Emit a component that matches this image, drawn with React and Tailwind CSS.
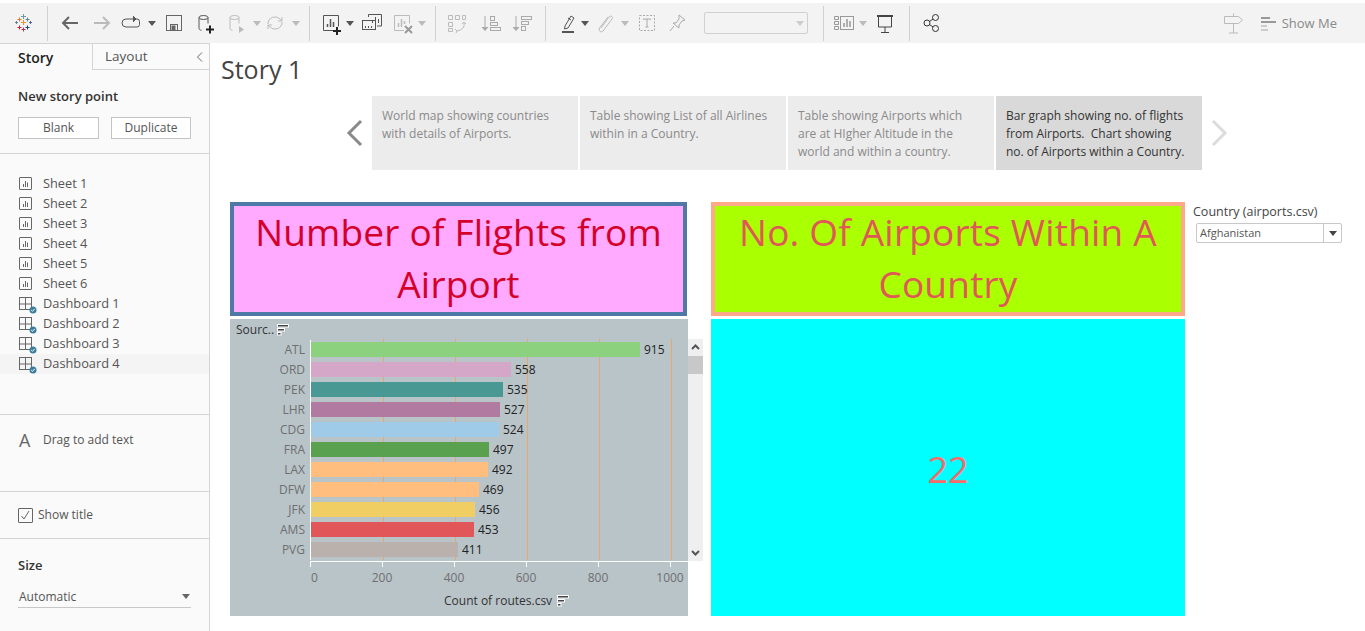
import React from 'react';

const font = "font-['Open_Sans',sans-serif]";

const sheets = ['Sheet 1', 'Sheet 2', 'Sheet 3', 'Sheet 4', 'Sheet 5', 'Sheet 6'];
const dashboards = ['Dashboard 1', 'Dashboard 2', 'Dashboard 3', 'Dashboard 4'];

const storyPoints = [
  { text: 'World map showing countries with details of Airports.' },
  { text: 'Table showing List of all Airlines within in a Country.' },
  { text: 'Table showing Airports which are at HIgher Altitude in the world and within a country.' },
  { text: 'Bar graph showing no. of flights from Airports.  Chart showing no. of Airports within a Country.', active: true },
];

const bars = [
  { code: 'ATL', value: 915, color: '#8cd17d' },
  { code: 'ORD', value: 558, color: '#d4a6c8' },
  { code: 'PEK', value: 535, color: '#499894' },
  { code: 'LHR', value: 527, color: '#b07aa1' },
  { code: 'CDG', value: 524, color: '#a0cbe8' },
  { code: 'FRA', value: 497, color: '#59a14f' },
  { code: 'LAX', value: 492, color: '#ffbe7d' },
  { code: 'DFW', value: 469, color: '#ffbe7d' },
  { code: 'JFK', value: 456, color: '#f1ce63' },
  { code: 'AMS', value: 453, color: '#e15759' },
  { code: 'PVG', value: 411, color: '#bab0ac' },
];

const ticks = [0, 200, 400, 600, 800, 1000];
const pxPerUnit = 0.36;

const Icon = ({ children, color = '#555' }) => (
  <svg width="24" height="24" viewBox="0 0 24 24" fill="none" stroke={color} strokeWidth="1" className="shrink-0">
    {children}
  </svg>
);

const Caret = ({ className = '', color = '#555' }) => (
  <svg width="8" height="5" viewBox="0 0 8 5" className={`shrink-0 ${className}`}>
    <path d="M0 0h8L4 5z" fill={color} />
  </svg>
);

const Sep = ({ className = '' }) => <div className={`w-px h-[35px] bg-[#d0d0d0] shrink-0 ${className}`} />;

const Logo = () => (
  <svg width="24" height="24" viewBox="0 0 24 24" fill="none" strokeWidth="1" className="shrink-0">
    <path d="M11.500 3v5M9 5.500h5" stroke="#7099a6" />
    <path d="M7.500 6.500v4M5.500 8.500h4" stroke="#e8762c" />
    <path d="M15.500 6.500v4M13.500 8.500h4" stroke="#5b879b" />
    <path d="M4.500 10v3M3 11.500h3" stroke="#59879b" />
    <path d="M11.500 9v5M9 11.500h5" stroke="#eb912b" />
    <path d="M18.500 10v3M17 11.500h3" stroke="#5b6591" />
    <path d="M7.500 14.500v4M5.500 16.500h4" stroke="#c72035" />
    <path d="M15.500 14.500v4M13.500 16.500h4" stroke="#1f447a" />
    <path d="M11.500 16.500v4M9.500 18.500h4" stroke="#b0354a" />
  </svg>
);

const DataIcon = ({ color }) => (
  <>
    <ellipse cx="10.500" cy="6.500" rx="4.500" ry="2" stroke={color} />
    <path d="M6 6.500v11c0 1 1 1.500 2.500 1.800M15 6.500v6" stroke={color} />
  </>
);

const SheetGlyph = ({ color = '#666' }) => (
  <svg width="14" height="14" viewBox="0 0 14 14" fill="none" stroke={color} className="shrink-0">
    <rect x="0.500" y="0.500" width="12" height="12" rx="0.500" />
    <path d="M4.500 7v3M6.500 4v6M8.500 5.500V10" />
  </svg>
);

const DashGlyph = () => (
  <div className="relative w-[14px] h-[14px] shrink-0">
    <svg width="14" height="14" viewBox="0 0 14 14" fill="none" stroke="#666">
      <rect x="0.500" y="0.500" width="12" height="12" />
      <path d="M0.500 7h12M6.500 0.500v12" />
    </svg>
    <svg width="8" height="8" viewBox="0 0 8 8" className="absolute left-[10px] top-[9px]">
      <circle cx="4" cy="4" r="3.500" fill="#3b7d9e" />
      <path d="M2.200 4l1.300 1.300L5.800 2.800" stroke="#fff" fill="none" />
    </svg>
  </div>
);

const SortGlyph = ({ color = '#fff', inner = '#444' }) => (
  <svg width="12" height="12" viewBox="0 0 12 12" className="shrink-0">
    <rect x="0" y="0" width="12" height="3.500" fill={color} />
    <rect x="0" y="4" width="8" height="3.500" fill={color} />
    <rect x="0" y="8" width="4.500" height="3.500" fill={color} />
    <rect x="1" y="1" width="10" height="1.500" fill={inner} />
    <rect x="1" y="5" width="6" height="1.500" fill={inner} />
    <rect x="1" y="9" width="2.500" height="1.500" fill={inner} />
  </svg>
);

const Toolbar = () => (
  <div className="h-10 bg-[#f3f3f3] flex items-center pl-3 shrink-0">
    <Logo />
    <Sep className="ml-[11px]" />
    <div className="ml-[10px] shrink-0">
      <Icon color="#666"><path d="M20 12H5M11 6l-6 6 6 6" strokeWidth="2" /></Icon>
    </div>
    <div className="ml-2 shrink-0">
      <Icon color="#bbb"><path d="M4 12h15M13 6l6 6-6 6" strokeWidth="2" /></Icon>
    </div>
    <div className="ml-[6px] shrink-0">
      <Icon color="#555"><path d="M15 8H6a2.500 2.500 0 0 0 0 8h11a2.500 2.500 0 0 0 2.500-2.500V10.500A2.500 2.500 0 0 0 17 8h-1" /><path d="M13 5l3 3-3 3" fill="#555" /></Icon>
    </div>
    <Caret className="ml-1" />
    <div className="ml-[6px] shrink-0">
      <Icon color="#666"><rect x="4.500" y="4.500" width="15" height="15" /><rect x="8.500" y="13.500" width="7" height="6" /><rect x="10" y="15" width="3" height="4.500" fill="#666" /></Icon>
    </div>
    <div className="ml-[7px] shrink-0">
      <Icon><DataIcon color="#555" /><path d="M13 18.500h8M17 14.500v8" stroke="#222" strokeWidth="2" /></Icon>
    </div>
    <div className="ml-[7px] shrink-0">
      <Icon><DataIcon color="#bbb" /><path d="M15 15v7l5-3.500z" fill="#bbb" stroke="none" /></Icon>
    </div>
    <Caret className="ml-[5px]" color="#bbb" />
    <div className="ml-[2px] shrink-0">
      <Icon color="#bbb"><path d="M5 13a7 7 0 0 1 12-5l2 2M19 11a7 7 0 0 1-12 5l-2-2" /><path d="M19 6v4h-4M5 18v-4h4" /></Icon>
    </div>
    <Caret className="ml-[5px]" color="#bbb" />
    <Sep className="ml-[9px]" />
    <div className="ml-[9px] shrink-0">
      <Icon color="#555"><path d="M17 19.500H4.500v-15h15v11" strokeWidth="1" /><path d="M8.500 16v-3M11.500 16V8M14.500 16v-5" strokeWidth="1.500" /><path d="M14 20h8M18 16v8" stroke="#222" strokeWidth="2" /></Icon>
    </div>
    <Caret className="ml-[3px]" />
    <div className="ml-[6px] shrink-0">
      <Icon color="#555"><path d="M8.500 6V3.500h13V15H17" /><path d="M12.500 12V9M15.500 12V6M18.500 12V8" /><rect x="2.500" y="9.500" width="13" height="9" /><path d="M5.500 17v-2M8.500 17v-2M11.500 17v-2" /></Icon>
    </div>
    <div className="ml-[6px] shrink-0">
      <Icon color="#bbb"><path d="M14 19.500H4.500v-15h15v8" /><path d="M8.500 16v-4M11.500 16V8M14.500 13v-3" strokeWidth="1.500" /><path d="M15 15l7 7M22 15l-7 7" stroke="#999" strokeWidth="2" /></Icon>
    </div>
    <Caret className="ml-1" color="#bbb" />
    <Sep className="ml-[9px]" />
    <div className="ml-[9px] shrink-0">
      <Icon color="#bbb"><path d="M3.500 4.500h4v4h-4zM10.500 4.500h4v4h-4zM17.500 4.500h3v4h-3zM3.500 11.500h4v4h-4zM3.500 17.500h4v3h-4z" /><path d="M19 12c1 4-2 7-7 8" /><path d="M10 18l2 2-1 2M17 13l2-2 2 2" /></Icon>
    </div>
    <div className="ml-[9px] shrink-0">
      <Icon color="#aaa"><path d="M7 5v14M4 16l3 3.500L10 16" fill="#aaa" /><rect x="12.500" y="5.500" width="4" height="4" /><rect x="12.500" y="11.500" width="7" height="3" /><rect x="12.500" y="16.500" width="10" height="3" /></Icon>
    </div>
    <div className="ml-[7px] shrink-0">
      <Icon color="#aaa"><path d="M7 5v14M4 16l3 3.500L10 16" fill="#aaa" /><rect x="12.500" y="5.500" width="10" height="3" /><rect x="12.500" y="10.500" width="7" height="3" /><rect x="12.500" y="15.500" width="4" height="4" /></Icon>
    </div>
    <Sep className="ml-3" />
    <div className="ml-[10px] shrink-0">
      <Icon color="#555"><path d="M9 15L15 5l3 2-6 10-3.500 1z" /><path d="M12 7l3 2" /><path d="M6 21h12" strokeWidth="2" /></Icon>
    </div>
    <Caret className="ml-px" />
    <div className="ml-1 shrink-0">
      <Icon color="#bbb"><path d="M8 17l8-11c2-2 4.500 0 3 2l-9 12c-2 2-5 0-3.500-3L15 6" /></Icon>
    </div>
    <Caret className="ml-1" color="#bbb" />
    <div className="ml-[6px] shrink-0">
      <Icon color="#aaa"><rect x="4.500" y="4.500" width="15" height="15" strokeDasharray="2 1.500" /><path d="M8.500 9V8h7v1M12 8v8M10.500 16h3" /></Icon>
    </div>
    <div className="ml-[6px] shrink-0">
      <Icon color="#aaa"><path d="M14 4l6 5-3 1-3 4 0 3-6-5 3 0 3-4z" /><path d="M9 15l-4 5" /></Icon>
    </div>
    <div className="ml-[15px] w-[104px] h-[22px] border border-[#d0d0d0] rounded-[2px] flex items-center justify-end pr-[3px] shrink-0">
      <Caret color="#ccc" />
    </div>
    <Sep className="ml-[15px]" />
    <div className="ml-[9px] shrink-0">
      <Icon color="#999"><path d="M1.500 5.500h4v3h-4zM1.500 10.500h4v3h-4zM1.500 15.500h4v3h-4z" /><rect x="7.500" y="5.500" width="13" height="13" /><path d="M11 16v-4M14 16V8M17 16v-6" strokeWidth="1.500" /></Icon>
    </div>
    <Caret className="ml-[2px]" color="#bbb" />
    <div className="ml-[6px] shrink-0">
      <Icon color="#444"><path d="M4 5h16" strokeWidth="2" /><path d="M5.500 5v11h13V5M12 16v5M8 21.500h8" /></Icon>
    </div>
    <Sep className="ml-3" />
    <div className="ml-[10px] shrink-0">
      <Icon color="#333"><circle cx="15.500" cy="6.500" r="3" /><circle cx="15.500" cy="17.500" r="3" /><circle cx="7" cy="12" r="3" /><path d="M9.500 10.500l3.500-2.500M9.500 13.500l3.500 2.500" /></Icon>
    </div>
    <div className="ml-auto shrink-0">
      <Icon color="#bbb"><path d="M12.500 2.500v3M12.500 13v9M8 22h9M3.500 5.500h14l4 3.500-4 3.500h-14z" /></Icon>
    </div>
    <div className="ml-[16px] mr-[28px] flex items-center shrink-0">
      <svg width="15" height="15" viewBox="0 0 15 15" className="shrink-0">
        <path d="M0 1h9v2H0z" fill="#999" />
        <path d="M0 5h15v2H0z" fill="#999" />
        <path d="M0 9h6v2H0z" fill="#ccc" />
        <path d="M0 13h7v2H0z" fill="#ccc" />
      </svg>
      <span className={`ml-[6px] text-[13px] leading-[18px] text-[#8a8a8a] ${font}`}>Show Me</span>
    </div>
  </div>
);

const Sidebar = () => (
  <aside className="w-[210px] shrink-0 bg-[#fafafa] border-r border-[#d4d4d4] flex flex-col text-[#555]">
    <div className="h-[27px] flex border-b-0 shrink-0">
      <div className="w-[92px] pl-[18px] flex items-center text-[14px] font-semibold text-[#222] border-t border-[#d4d4d4]">Story</div>
      <div className="flex-1 pl-[12px] pr-[6px] flex items-center justify-between text-[13.500px] text-[#555] bg-[#fafafa] border-l border-b border-t border-[#d4d4d4]">
        Layout
        <svg width="7" height="10" viewBox="0 0 7 10" fill="none" stroke="#666"><path d="M6 0.500L1.500 5 6 9.500" /></svg>
      </div>
    </div>
    <div className="h-[84px] border-b border-[#d4d4d4] px-[18px] pt-[17px] shrink-0">
      <div className="text-[13px] font-semibold text-[#333] leading-[18px]">New story point</div>
      <div className="flex justify-between w-[173px] mt-[12px]">
        <button className="w-[81px] h-[22px] border border-[#c4c4c4] bg-white text-[12px] text-[#555]">Blank</button>
        <button className="w-[80px] h-[22px] border border-[#c4c4c4] bg-white text-[12px] text-[#555]">Duplicate</button>
      </div>
    </div>
    <div className="h-[261px] border-b border-[#d4d4d4] pt-[20px] shrink-0">
      {sheets.map((s) => (
        <div key={s} className="h-5 pl-[19px] flex items-center gap-[10px] text-[12.800px]">
          <SheetGlyph />
          {s}
        </div>
      ))}
      {dashboards.map((d, i) => (
        <div key={d} className={`h-5 pl-[19px] flex items-center gap-[10px] text-[12.800px] ${i === 3 ? 'bg-[#f4f4f4]' : ''}`}>
          <DashGlyph />
          {d}
        </div>
      ))}
    </div>
    <div className="h-[77px] border-b border-[#d4d4d4] pl-[19px] pt-[13px] flex items-start gap-[12px] shrink-0">
      <span className="text-[18px] leading-[24px] text-[#666] w-[12px]">A</span>
      <span className="text-[12px] leading-[24px]">Drag to add text</span>
    </div>
    <div className="h-[47px] border-b border-[#d4d4d4] pl-[18px] flex items-center gap-[5px] shrink-0">
      <div className="w-[15px] h-[15px] border border-[#666] rounded-[1px] flex items-center justify-center">
        <svg width="11" height="11" viewBox="0 0 11 11" fill="none" stroke="#666"><path d="M1.500 6l2.500 3 5-8" /></svg>
      </div>
      <span className="text-[12px]">Show title</span>
    </div>
    <div className="px-[18px] pt-[17px]">
      <div className="text-[13px] font-semibold text-[#333] leading-[18px]">Size</div>
      <div className="mt-[12px] h-[22px] w-[173px] border-b border-[#c8c8c8] flex items-center justify-between pl-px pr-px text-[12px]">
        Automatic
        <Caret color="#666" />
      </div>
    </div>
  </aside>
);

const StoryNav = () => (
  <div className="flex items-center ml-[136px] mt-[11px] h-[74px]">
    <svg width="18" height="28" viewBox="0 0 18 28" fill="none" stroke="#8a8a8a" strokeWidth="3" className="shrink-0">
      <path d="M15 2L3 14l12 12" />
    </svg>
    <div className="ml-2 flex gap-[2px]">
      {storyPoints.map((p, i) => (
        <div key={i} className={`w-[206px] h-[74px] pl-[10px] pr-[14px] pt-[11px] text-[12px] leading-[18px] whitespace-pre-wrap ${p.active ? 'bg-[#d9d9d9] text-[#333]' : 'bg-[#ececec] text-[#8a8a8a]'}`}>
          {p.text}
        </div>
      ))}
    </div>
    <svg width="18" height="28" viewBox="0 0 18 28" fill="none" stroke="#dcdcdc" strokeWidth="3" className="ml-2 shrink-0">
      <path d="M3 2l12 12L3 26" />
    </svg>
  </div>
);

const Chart = () => (
  <div className="relative w-[458px] h-[297px] mt-[3px] bg-[#b9c4c9] text-[12px]">
    <div className="h-[21px] pl-[6px] flex items-center gap-[3px] text-[#333]">
      Sourc..
      <SortGlyph />
    </div>
    <div className="relative h-[220px]">
      {ticks.slice(1).map((t) => (
        <div key={t} className="absolute top-[-1px] bottom-0 w-px bg-[#e8a868]" style={{ left: 81 + t * pxPerUnit }} />
      ))}
      {bars.map((b) => (
        <div key={b.code} className="relative h-5 flex items-center">
          <div className="w-[75px] text-right text-[#6f6f6f]">{b.code}</div>
          <div className="ml-[5px] w-px h-5 bg-white shrink-0" />
          <div className="h-[15px] mb-px shrink-0" style={{ width: Math.floor(b.value * pxPerUnit), backgroundColor: b.color }} />
          <span className="ml-1 text-[#222]">{b.value}</span>
        </div>
      ))}
    </div>
    <div className="ml-[80px] h-px bg-white mt-px" />
    <div className="relative h-[30px] ml-[80px]">
      {ticks.map((t) => (
        <div key={t} className="absolute top-0" style={{ left: t * pxPerUnit }}>
          <div className="w-px h-[5px] bg-white" />
          <div className={`absolute top-[7px] text-[#6f6f6f] ${t === 0 ? 'left-[1px]' : 'left-0 -translate-x-1/2'}`}>{t}</div>
        </div>
      ))}
    </div>
    <div className="flex items-center pl-[214px] gap-[5px] text-[#333]">
      Count of routes.csv
      <SortGlyph />
    </div>
    <div className="absolute left-[458px] top-[20px] w-[15px] h-[222px] bg-[#efefef] flex flex-col items-center justify-between py-[5px]">
      <svg width="9" height="6" viewBox="0 0 9 6" fill="none" stroke="#555" strokeWidth="2"><path d="M1 5l3.500-3.500L8 5" /></svg>
      <div className="absolute top-[17px] left-0 w-[15px] h-[18px] bg-[#c8c8c8]" />
      <svg width="9" height="6" viewBox="0 0 9 6" fill="none" stroke="#555" strokeWidth="2"><path d="M1 1l3.500 3.500L8 1" /></svg>
    </div>
  </div>
);

const App = () => (
  <div className={`w-[1365px] h-[631px] overflow-hidden bg-white flex flex-col pt-[3px] ${font}`}>
    <Toolbar />
    <div className="flex flex-1 min-h-0">
      <Sidebar />
      <main className="flex-1 min-w-0 flex flex-col">
        <h1 className="pl-[11px] pt-[10px] text-[25px] leading-[33px] text-[#444] font-normal h-[42px]">Story 1</h1>
        <StoryNav />
        <div className="flex ml-5 mt-8">
          <div className="w-[458px] shrink-0">
            <div className="w-[457px] h-[114px] pb-[2px] border-4 border-[#4e79a7] bg-[#ffa9ff] text-[#d4002a] text-[37px] tracking-[0.2px] leading-[52px] text-center flex items-center justify-center">
              Number of Flights from Airport
            </div>
            <Chart />
          </div>
          <div className="w-[474px] ml-[23px] shrink-0">
            <div className="h-[114px] pb-[2px] border-4 border-[#ffa88a] bg-[#aaff00] text-[#e15759] text-[37px] tracking-[0.2px] leading-[52px] text-center flex items-center justify-center">
              No. Of Airports Within A Country
            </div>
            <div className="h-[297px] mt-[3px] pt-[4px] bg-[#00ffff] text-[#f96a6a] text-[36px] flex items-center justify-center">22</div>
          </div>
          <div className="ml-2 w-[150px] pt-[2px]">
            <div className="text-[12.500px] leading-[16px] text-[#444]">Country (airports.csv)</div>
            <div className="ml-[3px] mt-[3px] w-[146px] h-5 border border-[#c8c8c8] rounded-[2px] flex items-center text-[11px] text-[#555]">
              <span className="flex-1 pl-[3px]">Afghanistan</span>
              <div className="w-[18px] h-full border-l border-[#c8c8c8] flex items-center justify-center">
                <Caret color="#444" />
              </div>
            </div>
          </div>
        </div>
      </main>
    </div>
  </div>
);

export default App;
